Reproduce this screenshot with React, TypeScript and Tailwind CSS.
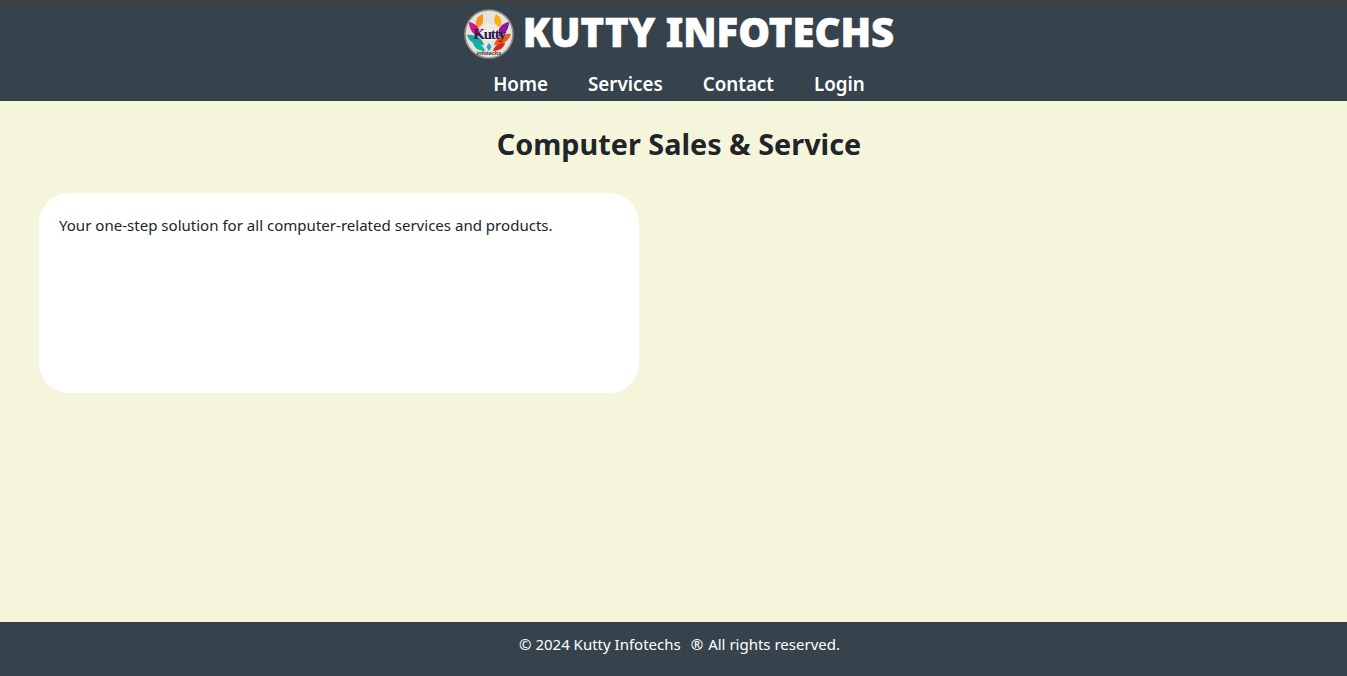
export default function App() {
  return (
    <div className="flex min-h-[676px] flex-col bg-[#f5f5dc] font-['Noto_Sans',sans-serif] text-[#212529]">
      <header className="flex h-[101px] flex-col items-center border-t-[3px] border-[#3f3f3f] bg-[#37434c] pl-[11px] text-white">
        <div className="mt-[6px] flex h-[50px] items-center gap-[9px]">
          <svg width="50" height="50" viewBox="0 0 50 50" className="shrink-0">
            <circle cx="25" cy="25" r="24.8" fill="#8f8f8f" />
            <circle cx="25" cy="25" r="23.2" fill="#e6e3df" />
            <path d="M19 5c-6 2-9 7-6 14 3-1 5-3 6-6 0-3 0-6 0-8z" fill="#f7931e" />
            <path d="M32 5c5 3 7 8 4 13-3-1-5-3-6-6 0-3 1-5 2-7z" fill="#f7b014" />
            <path d="M5 13c7 1 12 7 12 15-7-1-12-7-12-15z" fill="#d0158a" />
            <path d="M45 13c-7 1-12 7-12 15 7-1 12-7 12-15z" fill="#8a1a9e" />
            <path d="M3 26c8-1 15 3 17 10-8 1-15-3-17-10z" fill="#13a8a8" />
            <path d="M47 25c-8-1-15 4-17 11 8 1 15-4 17-11z" fill="#ee5a1e" />
            <path d="M9 34c6 0 11 3 12 8-6 0-11-3-12-8z" fill="#10b5a0" />
            <path d="M41 34c-6 0-11 3-12 8 6 0 11-3 12-8z" fill="#d42a1c" />
            <path d="M25 34l2.5 4-2.500 4-2.500-4z" fill="#2d9ad6" />
            <ellipse cx="25" cy="24" rx="10" ry="9" fill="#efeae6" />
            <text x="25" y="30" textAnchor="middle" fontSize="15" fontWeight="700" fill="#2a1c4d" fontFamily="'Liberation Serif',serif" letterSpacing="-1.2">Kutty</text>
            <text x="25" y="46" textAnchor="middle" fontSize="5.500" fontWeight="700" fill="#3a2a20" fontFamily="'Liberation Sans',sans-serif">infotechs</text>
          </svg>
          <h1 className="mb-[4px] text-[40px] leading-[46px] font-black [-webkit-text-stroke:0.6px_white]">KUTTY INFOTECHS</h1>
        </div>
        <nav className="mt-[10px] flex gap-10 text-[18.8px] leading-[30px] font-semibold">
          <a>Home</a>
          <a>Services</a>
          <a>Contact</a>
          <a>Login</a>
        </nav>
      </header>
      <main className="flex-1 px-[39px]">
        <h2 className="mt-[23px] pl-[11px] text-center text-[28.8px] leading-[40px] font-bold">Computer Sales &amp; Service</h2>
        <div className="mt-[29px] h-[200px] w-[600px] rounded-[30px] bg-white p-5 text-[15.05px] leading-[24px]">
          Your one-step solution for all computer-related services and products.
        </div>
      </main>
      <footer className="flex h-[54px] justify-center bg-[#37434c] pl-[12px] pt-[10px] text-[15px] leading-[24px] text-white">
        <span>© 2024 Kutty Infotechs</span>
        <span className="ml-[10px] mr-[5px]">®</span>
        <span>All rights reserved.</span>
      </footer>
    </div>
  );
}
